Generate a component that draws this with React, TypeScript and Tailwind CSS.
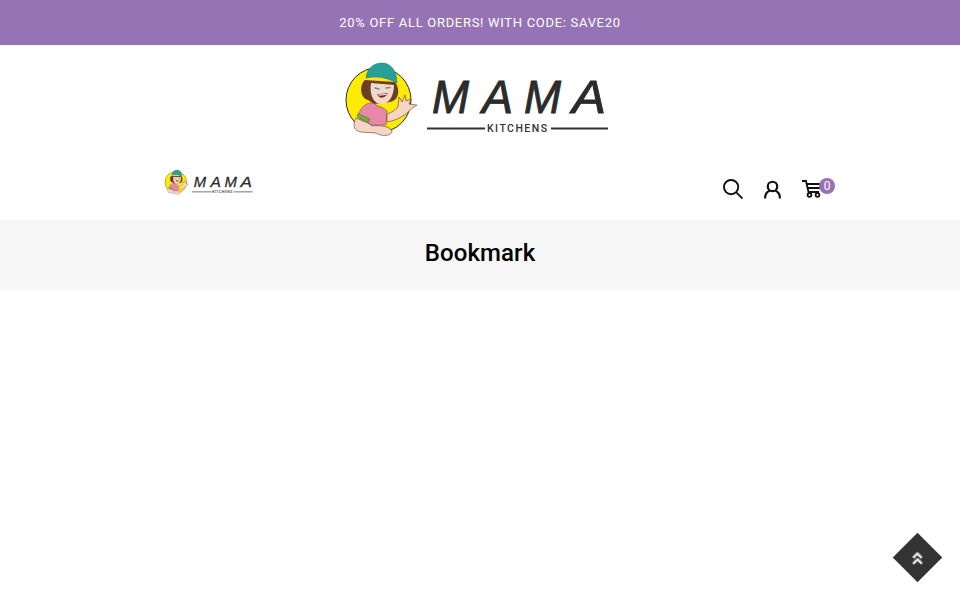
import { FaAngleDoubleUp } from 'react-icons/fa';

function Logo({ className }: { className: string }) {
  return (
    <svg viewBox="0 0 272 82" className={className}>
      {/* mascot */}
      <circle cx="38.5" cy="42" r="32.5" fill="#fdea05" stroke="#2a2a2a" strokeWidth="1" />
      <path d="M25 22 C19 27 20 40 28 42 L34 46 L50 44 C60 42 60 30 55 24 Z" fill="#6e3d2a" />
      <path d="M31 25 C29 37 34 46 41 46 C49 46 54 38 54 27 Z" fill="#f5d8c8" />
      <path d="M35 30 L39 31 M46 30 L50 29.5" stroke="#5c95a0" strokeWidth="1.6" strokeLinecap="round" />
      <path d="M37 36 C39 41 45 41 48 35 C44 35.5 40 36 37 36 Z" fill="#6f2a2a" />
      <path d="M38 36.4 C41 36.2 44 36 47 35.4 L46.5 36.8 C44 37.4 41 37.6 38.5 37.4 Z" fill="#fff" />
      <path d="M26 20 C27 11 33 5 42 5 C51 5 57 13 57 25 C46 19 36 18 26 20 Z" fill="#27a099" stroke="#1f6f6b" strokeWidth="0.5" />
      <path d="M18 58 C20 50 26 44 33 45 C38 49 44 49 47 53 L46 67 L26 67 Z" fill="#e887a9" stroke="#6a3a4a" strokeWidth="0.5" />
      <path d="M18 55.5 L30 61 L28.5 64.5 L17 59 Z" fill="#6cb33f" stroke="#3d6a22" strokeWidth="0.4" />
      <path d="M16 60 C12 67 14 73 21 74 L36 75 C42 79 52 78 52 73 C50 68 39 67 32 68 L28 65 Z" fill="#f6d5c3" stroke="#5a3b30" strokeWidth="0.6" />
      <path d="M47 56 C51 55 55 52 58 49 L59 39 L62 44 L65 37 L66 43 L71 41 L69 46 L77 47 L71 51 C66 57 58 62 47 64 Z" fill="#f6d5c3" stroke="#5a3b30" strokeWidth="0.6" />
      {/* wordmark */}
      <g fill="#2b2b2b" stroke="#2b2b2b" strokeWidth="0.9" fontFamily="'Liberation Sans', sans-serif" fontStyle="italic" fontSize="46">
        <text x="92" y="55" textLength="37" lengthAdjust="spacingAndGlyphs">M</text>
        <text x="142" y="55" textLength="31" lengthAdjust="spacingAndGlyphs">A</text>
        <text x="184" y="55" textLength="37" lengthAdjust="spacingAndGlyphs">M</text>
        <text x="232" y="55" textLength="34" lengthAdjust="spacingAndGlyphs">A</text>
      </g>
      <path d="M87 70.5 H145 M211 70.5 H268" stroke="#333" strokeWidth="2" />
      <text x="147" y="74" textLength="60" fill="#333" fontFamily="Roboto, sans-serif" fontSize="10.5" fontWeight="500">
        KITCHENS
      </text>
    </svg>
  );
}

function SearchIcon() {
  return (
    <svg viewBox="0 0 21 21" className="h-5 w-5" fill="none" stroke="#111" strokeWidth="2">
      <circle cx="8.5" cy="8.5" r="7.5" />
      <path d="M14 14 L20.5 20.5" />
    </svg>
  );
}

function UserIcon() {
  return (
    <svg viewBox="0 0 18 19" className="h-[19px] w-[17px]" fill="none" stroke="#111" strokeWidth="2.3">
      <circle cx="9" cy="6.3" r="5" />
      <path d="M1.2 19 C1 14.5 3 12 6.2 10.6 M16.8 19 C17 14.5 15 12 11.8 10.6" />
    </svg>
  );
}

function CartIcon() {
  return (
    <svg viewBox="0 0 20 18" className="h-[18px] w-5" fill="none" stroke="#111" strokeWidth="1.8">
      <path d="M0 1 H4 L6.5 12 H17" />
      <path d="M4.5 4 H19 M5.5 8 H18" />
      <circle cx="7.5" cy="15" r="1.9" />
      <circle cx="15.5" cy="15" r="1.9" />
    </svg>
  );
}

export default function App() {
  return (
    <div className="min-h-screen bg-white font-['Roboto',sans-serif] text-black">
      {/* Announcement */}
      <div className="flex h-[45px] items-center justify-center bg-[#9673b5] text-[13px] tracking-[0.7px] text-white">
        20% OFF ALL ORDERS! WITH CODE: SAVE20
      </div>

      {/* Main logo */}
      <div className="flex h-[105px] justify-center pt-[13px] pr-[8px]">
        <Logo className="h-[82px] w-[272px]" />
      </div>

      {/* Nav row */}
      <div className="flex h-[70px] w-[835px] items-start justify-between pl-[163px]">
        <Logo className="mt-[18px] h-[28px] w-[91px]" />
        <div className="mt-[29px] flex items-center gap-[21px]">
          <SearchIcon />
          <UserIcon />
          <div className="relative mr-[13px]">
            <CartIcon />
            <span className="absolute -top-[2px] left-[17px] flex h-4 w-4 items-center justify-center rounded-full bg-[#9673b5] text-[12px] leading-none text-white">
              0
            </span>
          </div>
        </div>
      </div>

      {/* Page title */}
      <div className="flex h-[70px] items-center justify-center bg-[#f6f6f6] pb-[4px]">
        <h1 className="text-2xl font-medium tracking-[0.1px]">Bookmark</h1>
      </div>

      {/* Back to top */}
      <button className="fixed bottom-[25px] right-[25px] flex h-[35px] w-[35px] rotate-45 items-center justify-center bg-[#333333]">
        <FaAngleDoubleUp className="-rotate-45 text-[16px] text-[#e8e8e8]" />
      </button>
    </div>
  );
}
